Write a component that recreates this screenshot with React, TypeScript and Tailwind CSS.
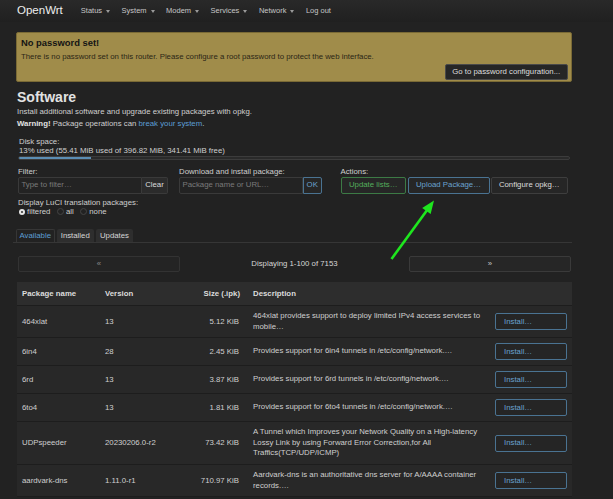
import React from "react";

// ── Data ──────────────────────────────────────────────────────────────────────

const navItems = ["Status", "System", "Modem", "Services", "Network"];

interface Pkg {
  name: string;
  version: string;
  size: string;
  desc: string[];
}

const packages: Pkg[] = [
  {
    name: "464xlat",
    version: "13",
    size: "5.12 KiB",
    desc: ["464xlat provides support to deploy limited IPv4 access services to", "mobile…"],
  },
  { name: "6in4", version: "28", size: "2.45 KiB", desc: ["Provides support for 6in4 tunnels in /etc/config/network.…"] },
  { name: "6rd", version: "13", size: "3.87 KiB", desc: ["Provides support for 6rd tunnels in /etc/config/network.…"] },
  { name: "6to4", version: "13", size: "1.81 KiB", desc: ["Provides support for 6to4 tunnels in /etc/config/network.…"] },
  {
    name: "UDPspeeder",
    version: "20230206.0-r2",
    size: "73.42 KiB",
    desc: [
      "A Tunnel which Improves your Network Quality on a High-latency",
      "Lossy Link by using Forward Error Correction,for All",
      "Traffics(TCP/UDP/ICMP)",
    ],
  },
  {
    name: "aardvark-dns",
    version: "1.11.0-r1",
    size: "710.97 KiB",
    desc: ["Aardvark-dns is an authoritative dns server for A/AAAA container", "records.…"],
  },
];

// ── Small pieces ──────────────────────────────────────────────────────────────

function Caret() {
  return (
    <span className="ml-[4px] inline-block h-0 w-0 border-x-[2.5px] border-t-[3px] border-x-transparent border-t-[#9a9a9a]" />
  );
}

function Radio({ checked, label }: { checked?: boolean; label: string }) {
  return (
    <span className="flex items-center gap-[2px]">
      {checked ? (
        <span className="flex h-[6.5px] w-[6.5px] items-center justify-center rounded-full bg-[#e6e6e6]">
          <span className="h-[2.5px] w-[2.5px] rounded-full bg-[#333]" />
        </span>
      ) : (
        <span className="h-[7px] w-[7px] rounded-full border border-[#444] bg-[#222]" />
      )}
      <span>{label}</span>
    </span>
  );
}

// ── Component ─────────────────────────────────────────────────────────────────

export default function App() {
  return (
    <div className="relative h-[499px] w-[613px] overflow-hidden bg-[#222222] font-['Liberation_Sans',Arial,sans-serif] text-[7.8px] text-[#cfcfcf]">
      {/* Navbar */}
      <header className="flex h-[22px] items-center bg-gradient-to-b from-[#292929] to-[#202020] pl-[17px]">
        <span className="text-[11.5px] text-[#ededed]">OpenWrt</span>
        <nav className="ml-[18px] flex items-center gap-[6.5px] text-[7.5px] text-[#c6c6c6]">
          {navItems.map((n) => (
            <span key={n} className="flex items-center pr-[5px]">
              {n}
              <Caret />
            </span>
          ))}
          <span>Log out</span>
        </nav>
      </header>

      <main className="ml-[16px] w-[556px]">
        {/* No password alert */}
        <div className="mt-[10px] flex h-[50px] flex-col rounded-[2px] border border-[#7a6a35] bg-[#a08c4a] pl-[4px] pr-[3px]">
          <div className="mt-[4px] text-[9.4px] font-bold leading-[12px] text-[#141414]">No password set!</div>
          <div className="mt-[2px] leading-[12px] text-[#2b2616]">
            There is no password set on this router. Please configure a root password to protect the web interface.
          </div>
          <div className="mt-[1px] flex justify-end">
            <button className="h-[16px] w-[123.5px] rounded-[2px] border border-[#4a4a4a] bg-[#262626] text-[7.8px] text-[#dedede]">
              Go to password configuration...
            </button>
          </div>
        </div>

        {/* Title */}
        <h2 className="mt-[7px] pl-[1px] text-[14px] font-bold leading-[17px] text-[#e2e2e2]">Software</h2>
        <p className="pl-[1px] leading-[11.5px]">Install additional software and upgrade existing packages with opkg.</p>
        <p className="pl-[1px] leading-[11.5px]">
          <b className="text-[#e2e2e2]">Warning!</b> Package operations can{" "}
          <span className="text-[#5c9ed4]">break your system</span>.
        </p>

        {/* Disk space */}
        <div className="mt-[8px] pl-[3px] leading-[9px]">Disk space:</div>
        <div className="pl-[3px] leading-[9px]">13% used (55.41 MiB used of 396.82 MiB, 341.41 MiB free)</div>
        <div className="ml-[2px] mt-[1px] h-[4px] w-[552px] overflow-hidden rounded-full border border-[#3c3c3c] bg-[#2a2a2a]">
          <div className="h-full w-[13%] bg-[#5b8db3]" />
        </div>

        {/* Controls */}
        <div className="mt-[6.5px] flex pl-[2px]">
          <div className="w-[161px]">
            <div className="leading-[9px]">Filter:</div>
            <div className="mt-[1px] flex h-[17px]">
              <div className="flex w-[124px] items-center rounded-l-[2px] border border-[#3a3a3a] bg-[#232323] pl-[2.5px] text-[#7a7a7a]">
                Type to filter…
              </div>
              <div className="flex w-[26px] items-center justify-center rounded-r-[2px] border border-l-0 border-[#3a3a3a] bg-[#2b2b2b] text-[#dcdcdc]">
                Clear
              </div>
            </div>
          </div>
          <div className="w-[161.5px]">
            <div className="leading-[9px]">Download and install package:</div>
            <div className="mt-[1px] flex h-[17px]">
              <div className="flex w-[124px] items-center rounded-l-[2px] border border-[#3a3a3a] bg-[#232323] pl-[2.5px] text-[#7a7a7a]">
                Package name or URL…
              </div>
              <div className="flex w-[18.5px] items-center justify-center rounded-r-[2px] border border-[#4a7392] bg-[#262626] text-[#6aa2d0]">
                OK
              </div>
            </div>
          </div>
          <div>
            <div className="leading-[9px]">Actions:</div>
            <div className="mt-[1px] flex h-[17px] gap-[1.5px]">
              <div className="flex w-[65.5px] items-center justify-center rounded-[2px] border border-[#3c7a45] bg-[#262626] text-[#54ad5c]">
                Update lists…
              </div>
              <div className="flex w-[82px] items-center justify-center rounded-[2px] border border-[#4a7392] bg-[#262626] text-[#6aa2d0]">
                Upload Package…
              </div>
              <div className="flex w-[76.5px] items-center justify-center rounded-[2px] border border-[#3e3e3e] bg-[#262626] text-[#dcdcdc]">
                Configure opkg…
              </div>
            </div>
          </div>
        </div>

        <div className="mt-[4.5px] pl-[2px] leading-[9px]">Display LuCI translation packages:</div>
        <div className="flex h-[9.5px] items-center gap-[6.5px] pl-[2.5px]">
          <Radio checked label="filtered" />
          <Radio label="all" />
          <Radio label="none" />
        </div>

        {/* Tabs */}
        <div className="-ml-[3px] mt-[12.5px] flex h-[14px] gap-[2px] border-b border-[#363636] pl-[3px]">
          <div className="flex w-[38.5px] items-center justify-center rounded-t-[2px] border border-b-0 border-[#363636] bg-[#222222] text-[#5c9ed4]">
            Available
          </div>
          <div className="flex w-[37.5px] items-center justify-center rounded-t-[2px] bg-[#2e2e2e] text-[#d6d6d6]">
            Installed
          </div>
          <div className="flex w-[37px] items-center justify-center rounded-t-[2px] bg-[#2e2e2e] text-[#d6d6d6]">
            Updates
          </div>
        </div>

        {/* Pagination */}
        <div className="ml-[2px] mt-[13px] grid h-[16px] w-[553px] grid-cols-[162px_1fr_162px]">
          <div className="flex items-center justify-center rounded-[2px] border border-[#333] bg-[#242424]">
            <span className="text-[#8a8a8a]">«</span>
          </div>
          <div className="flex items-center justify-center text-[#d6d6d6]">Displaying 1-100 of 7153</div>
          <div className="flex items-center justify-center rounded-[2px] border border-[#3a3a3a] bg-[#262626]">
            <span className="text-[#c4c4c4]">»</span>
          </div>
        </div>

        {/* Table */}
        <div className="ml-[1px] mt-[10px] w-[555px]">
          <div className="grid h-[23px] grid-cols-[83px_90px_55px_245px_82px] items-center bg-[#2d2d2d] font-bold text-[#dcdcdc]">
            <div className="pl-[5px]">Package name</div>
            <div className="pl-[5px]">Version</div>
            <div className="pr-[5px] text-right">Size (.ipk)</div>
            <div className="pl-[8px]">Description</div>
            <div />
          </div>
          {packages.map((p) => (
            <div
              key={p.name}
              className="grid grid-cols-[83px_90px_55px_245px_82px] items-center border-t border-[#1d1d1d] bg-[#282828] py-[5px] last:border-b"
            >
              <div className="pl-[5px]">{p.name}</div>
              <div className="pl-[5px]">{p.version}</div>
              <div className="pr-[6px] text-right">{p.size}</div>
              <div className="pl-[8px] leading-[10.6px]">
                {p.desc.map((line, i) => (
                  <div key={i}>{line}</div>
                ))}
              </div>
              <div className="pl-[4.5px]">
                <div className="flex h-[17px] w-[72px] items-center rounded-[2px] border border-[#4a7392] bg-[#252525] pl-[8.5px] text-[#6aa2d0]">
                  Install…
                </div>
              </div>
            </div>
          ))}
        </div>
      </main>

      {/* Annotation arrow */}
      <svg className="pointer-events-none absolute left-0 top-0" width="613" height="499" viewBox="0 0 613 499">
        <line x1="391.5" y1="259" x2="426.8" y2="210.5" stroke="#1ee61e" strokeWidth="2.6" />
        <polygon points="434,200.5 422.2,208 430.6,214" fill="#1ee61e" />
      </svg>
    </div>
  );
}
